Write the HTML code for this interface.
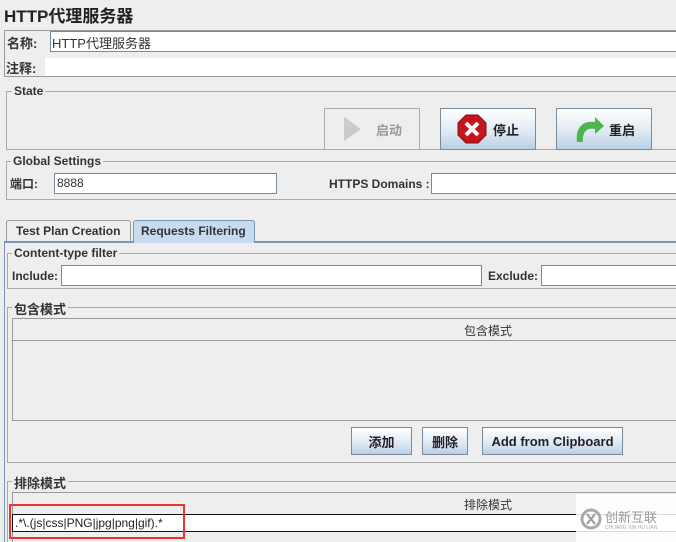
<!DOCTYPE html>
<html><head><meta charset="utf-8"><style>
*{margin:0;padding:0;box-sizing:border-box}
html,body{width:676px;height:542px;overflow:hidden}
body{background:#eeeeee;font-family:"Liberation Sans","Noto Sans CJK SC",sans-serif;font-size:12px;color:#333;position:relative}
.a{position:absolute}
.b{font-weight:bold}
.inp{position:absolute;background:#fff;border:1px solid #7a8a99;border-right:none}
.grp{position:absolute;border:1px solid #a8a8a8}
.gt{position:absolute;background:#eeeeee;padding:0 2px;font-weight:bold;color:#333}
.btn{position:absolute;border:1px solid #7a8a99;background:linear-gradient(#fff,#dde8f3 60%,#b8cfe5);font-weight:bold;color:#222;display:flex;align-items:center;justify-content:center;font-size:13px}
</style></head><body>
<div class="a b" style="left:4px;top:2px;font-size:17px;color:#222">HTTP代理服务器</div>
<div class="grp" style="left:4px;top:30px;width:680px;height:47px;border-color:#999"></div>
<div class="a b" style="left:7px;top:33px;font-size:13px">名称:</div>
<div class="inp" style="left:50px;top:31px;width:630px;height:21px;font-size:13px;padding:1px 1px">HTTP代理服务器</div>
<div class="a b" style="left:6px;top:58px;font-size:13px">注释:</div>
<div class="a" style="left:45px;top:58px;width:640px;height:18px;background:#fff"></div>

<div class="grp" style="left:6px;top:91px;width:680px;height:59px"></div>
<div class="gt" style="left:12px;top:84px">State</div>
<div class="btn" style="left:324px;top:108px;width:96px;height:42px;background:#eeeeee;border-color:#aaa;color:#999">
<svg width="20" height="26" style="margin-right:14px"><polygon points="2,1 19,13 2,25" fill="#c8cccc"/></svg>启动</div>
<div class="btn" style="left:440px;top:108px;width:96px;height:42px">
<svg width="30" height="30" style="margin-right:6px"><polygon points="9,1 21,1 29,9 29,21 21,29 9,29 1,21 1,9" fill="#c4161c" stroke="#8a0c10"/><path d="M9,9L21,21M21,9L9,21" stroke="#fff" stroke-width="4"/></svg>停止</div>
<div class="btn" style="left:556px;top:108px;width:96px;height:42px">
<svg width="32" height="30" style="margin-right:4px"><path d="M4,28 C2,14 10,6 22,8 L22,3 L31,12 L22,20 L22,15 C14,13 9,18 10,28 Z" fill="#4cb64a"/></svg>重启</div>

<div class="grp" style="left:6px;top:161px;width:680px;height:39px"></div>
<div class="gt" style="left:11px;top:154px">Global Settings</div>
<div class="a b" style="left:10px;top:175px;font-size:12px">端口:</div>
<div class="inp" style="left:54px;top:173px;width:223px;height:21px;border-right:1px solid #7a8a99;padding:2px 2px">8888</div>
<div class="a b" style="left:329px;top:177px">HTTPS Domains :</div>
<div class="inp" style="left:431px;top:173px;width:250px;height:21px"></div>

<div class="a" style="left:4px;top:241px;width:680px;height:310px;border-left:1px solid #7a96b8;border-top:2px solid #7a96b8"></div>
<div class="a b" style="left:6px;top:220px;width:125px;height:22px;border:1px solid #999;border-bottom:none;padding:3px 9px;border-radius:3px 3px 0 0">Test Plan Creation</div>
<div class="a b" style="left:133px;top:220px;width:122px;height:23px;border:1px solid #7a96b8;border-bottom:none;background:#c8daf0;padding:3px 7px;border-radius:3px 3px 0 0">Requests Filtering</div>

<div class="grp" style="left:7px;top:253px;width:680px;height:36px"></div>
<div class="gt" style="left:12px;top:246px">Content-type filter</div>
<div class="a b" style="left:12px;top:269px">Include:</div>
<div class="inp" style="left:61px;top:265px;width:421px;height:21px;border-right:1px solid #7a8a99"></div>
<div class="a b" style="left:488px;top:269px">Exclude:</div>
<div class="inp" style="left:541px;top:265px;width:140px;height:21px"></div>

<div class="grp" style="left:7px;top:307px;width:680px;height:156px"></div>
<div class="gt" style="left:12px;top:299px;font-size:13px">包含模式</div>
<div class="a" style="left:12px;top:318px;width:670px;height:103px;border:1px solid #999;border-right:none;background:#eeeeee"></div>
<div class="a" style="left:13px;top:340px;width:670px;border-top:1px solid #999"></div>
<div class="a" style="left:464px;top:322px;font-size:12px">包含模式</div>
<div class="btn" style="left:351px;top:427px;width:61px;height:28px">添加</div>
<div class="btn" style="left:422px;top:427px;width:46px;height:28px">删除</div>
<div class="btn" style="left:482px;top:427px;width:141px;height:28px">Add from Clipboard</div>

<div class="grp" style="left:7px;top:481px;width:680px;height:80px"></div>
<div class="gt" style="left:12px;top:473px;font-size:13px">排除模式</div>
<div class="a" style="left:12px;top:492px;width:670px;height:60px;border:1px solid #999;border-right:none"></div>
<div class="a" style="left:464px;top:496px;font-size:12px">排除模式</div>
<div class="a" style="left:12px;top:514px;width:670px;height:18px;background:#fff;border:1px solid #111;border-right:none;padding:1px 2px;font-size:12px;color:#222">.*\.(js|css|PNG|jpg|png|gif).*</div>
<div class="a" style="left:9px;top:504px;width:176px;height:35px;border:2px solid #e33"></div>

<div class="a" style="left:576px;top:494px;width:100px;height:48px;background:rgba(255,255,255,0.85)"></div>
<svg class="a" style="left:580px;top:508px" width="22" height="22"><circle cx="11" cy="11" r="9" fill="none" stroke="#aaa" stroke-width="3"/><path d="M7,6L15,16M15,6L7,16" stroke="#999" stroke-width="2"/></svg>
<div class="a" style="left:605px;top:507px;font-size:13px;color:#999">创新互联</div>
<div class="a" style="left:605px;top:525px;font-size:5px;color:#aaa">CHUANG XIN HU LIAN</div>
</body></html>
